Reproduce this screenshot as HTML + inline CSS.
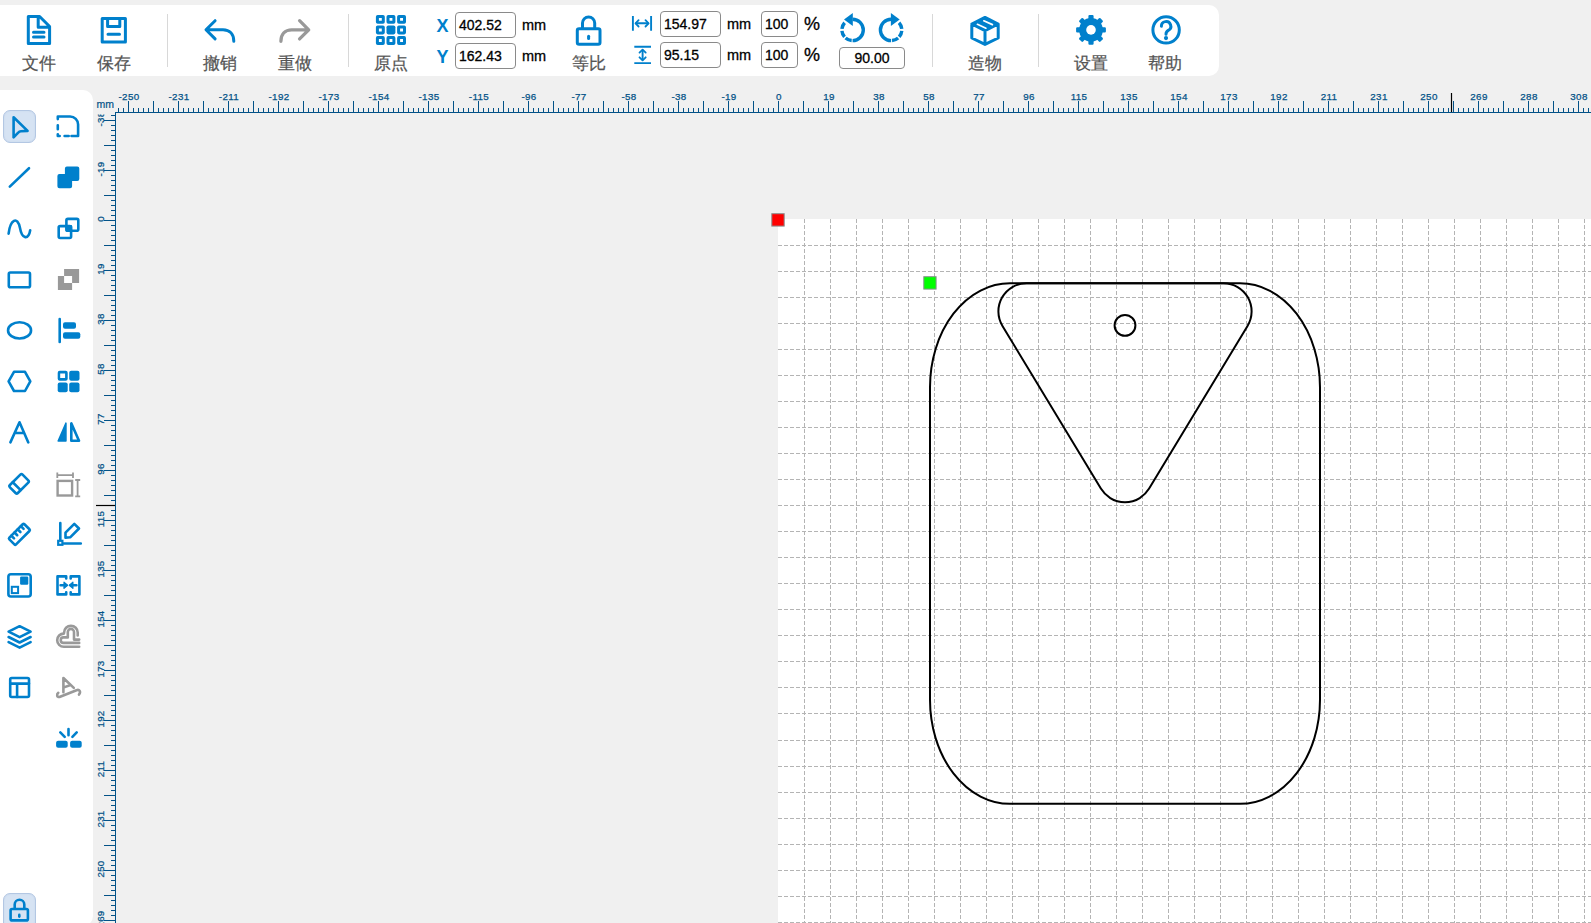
<!DOCTYPE html><html><head><meta charset="utf-8"><style>
*{box-sizing:border-box}
html,body{margin:0;padding:0}
body{width:1591px;height:923px;overflow:hidden;background:#f0f0f0;position:relative;font-family:"Liberation Sans",sans-serif}
.abs{position:absolute}
.lbl{position:absolute;font-size:17px;color:#555555;white-space:nowrap;transform:translateX(-50%);line-height:1;-webkit-text-stroke:0.25px #555555}
.inp{position:absolute;border:1px solid #8a8a8a;border-radius:4px;background:#fff;font-size:14px;color:#000;line-height:1;white-space:nowrap;-webkit-text-stroke:0.3px #000}
.unit{position:absolute;font-size:14.5px;color:#000;line-height:1;white-space:nowrap;-webkit-text-stroke:0.3px #000}
.sep{position:absolute;width:1px;background:#d8d8d8}
</style></head><body>

<div class="abs" style="left:778px;top:219px;width:813px;height:704px;background:#fff"></div>
<svg class="abs" style="left:0;top:0" width="1591" height="923" viewBox="0 0 1591 923"><g stroke="#b4b4b4" stroke-width="1" stroke-dasharray="4 2"><line x1="804.5" y1="219" x2="804.5" y2="923" /><line x1="830.5" y1="219" x2="830.5" y2="923" /><line x1="856.5" y1="219" x2="856.5" y2="923" /><line x1="882.5" y1="219" x2="882.5" y2="923" /><line x1="908.5" y1="219" x2="908.5" y2="923" /><line x1="934.5" y1="219" x2="934.5" y2="923" /><line x1="960.5" y1="219" x2="960.5" y2="923" /><line x1="986.5" y1="219" x2="986.5" y2="923" /><line x1="1012.5" y1="219" x2="1012.5" y2="923" /><line x1="1038.5" y1="219" x2="1038.5" y2="923" /><line x1="1064.5" y1="219" x2="1064.5" y2="923" /><line x1="1090.5" y1="219" x2="1090.5" y2="923" /><line x1="1116.5" y1="219" x2="1116.5" y2="923" /><line x1="1142.5" y1="219" x2="1142.5" y2="923" /><line x1="1168.5" y1="219" x2="1168.5" y2="923" /><line x1="1194.5" y1="219" x2="1194.5" y2="923" /><line x1="1220.5" y1="219" x2="1220.5" y2="923" /><line x1="1246.5" y1="219" x2="1246.5" y2="923" /><line x1="1272.5" y1="219" x2="1272.5" y2="923" /><line x1="1298.5" y1="219" x2="1298.5" y2="923" /><line x1="1324.5" y1="219" x2="1324.5" y2="923" /><line x1="1350.5" y1="219" x2="1350.5" y2="923" /><line x1="1376.5" y1="219" x2="1376.5" y2="923" /><line x1="1402.5" y1="219" x2="1402.5" y2="923" /><line x1="1428.5" y1="219" x2="1428.5" y2="923" /><line x1="1454.5" y1="219" x2="1454.5" y2="923" /><line x1="1480.5" y1="219" x2="1480.5" y2="923" /><line x1="1506.5" y1="219" x2="1506.5" y2="923" /><line x1="1532.5" y1="219" x2="1532.5" y2="923" /><line x1="1558.5" y1="219" x2="1558.5" y2="923" /><line x1="1584.5" y1="219" x2="1584.5" y2="923" /><line x1="778" y1="245.5" x2="1591" y2="245.5" /><line x1="778" y1="271.5" x2="1591" y2="271.5" /><line x1="778" y1="297.5" x2="1591" y2="297.5" /><line x1="778" y1="323.5" x2="1591" y2="323.5" /><line x1="778" y1="349.5" x2="1591" y2="349.5" /><line x1="778" y1="375.5" x2="1591" y2="375.5" /><line x1="778" y1="401.5" x2="1591" y2="401.5" /><line x1="778" y1="427.5" x2="1591" y2="427.5" /><line x1="778" y1="453.5" x2="1591" y2="453.5" /><line x1="778" y1="479.5" x2="1591" y2="479.5" /><line x1="778" y1="505.5" x2="1591" y2="505.5" /><line x1="778" y1="531.5" x2="1591" y2="531.5" /><line x1="778" y1="557.5" x2="1591" y2="557.5" /><line x1="778" y1="583.5" x2="1591" y2="583.5" /><line x1="778" y1="609.5" x2="1591" y2="609.5" /><line x1="778" y1="635.5" x2="1591" y2="635.5" /><line x1="778" y1="661.5" x2="1591" y2="661.5" /><line x1="778" y1="687.5" x2="1591" y2="687.5" /><line x1="778" y1="713.5" x2="1591" y2="713.5" /><line x1="778" y1="740.5" x2="1591" y2="740.5" /><line x1="778" y1="766.5" x2="1591" y2="766.5" /><line x1="778" y1="792.5" x2="1591" y2="792.5" /><line x1="778" y1="818.5" x2="1591" y2="818.5" /><line x1="778" y1="844.5" x2="1591" y2="844.5" /><line x1="778" y1="870.5" x2="1591" y2="870.5" /><line x1="778" y1="896.5" x2="1591" y2="896.5" /><line x1="778" y1="922.5" x2="1591" y2="922.5" /></g><g fill="none" stroke="#000" stroke-width="2"><rect x="930" y="283.25" width="390" height="520.6" rx="80" ry="104"/><path d="M1026.60,283.20 L1223.40,283.20 A28.2,28.2 0 0 1 1247.53,326.00 L1149.13,488.60 A28.2,28.2 0 0 1 1100.87,488.60 L1002.47,326.00 A28.2,28.2 0 0 1 1026.60,283.20 Z"/><circle cx="1125" cy="325.4" r="10.4"/></g><rect x="771.8" y="213.7" width="12.4" height="12.4" fill="#ff0000" stroke="#8c9090" stroke-width="1"/><rect x="923.8" y="276.7" width="12.3" height="12.4" fill="#00ff00" stroke="#8c9090" stroke-width="1"/></svg>
<svg class="abs" style="left:0;top:0" width="1591" height="923" viewBox="0 0 1591 923"><defs><clipPath id="hc"><rect x="116" y="85" width="1475" height="28"/></clipPath><clipPath id="vc"><rect x="93" y="114.5" width="23" height="810"/></clipPath></defs><g stroke="#035287" stroke-width="1" shape-rendering="crispEdges"><line x1="115" y1="112.5" x2="1591" y2="112.5"/><line x1="115.5" y1="112" x2="115.5" y2="923"/><line x1="118.5" y1="108" x2="118.5" y2="112"/><line x1="123.5" y1="108" x2="123.5" y2="112"/><line x1="128.5" y1="101" x2="128.5" y2="112"/><line x1="133.5" y1="108" x2="133.5" y2="112"/><line x1="138.5" y1="108" x2="138.5" y2="112"/><line x1="143.5" y1="108" x2="143.5" y2="112"/><line x1="148.5" y1="108" x2="148.5" y2="112"/><line x1="153.5" y1="101" x2="153.5" y2="112"/><line x1="158.5" y1="108" x2="158.5" y2="112"/><line x1="163.5" y1="108" x2="163.5" y2="112"/><line x1="168.5" y1="108" x2="168.5" y2="112"/><line x1="173.5" y1="108" x2="173.5" y2="112"/><line x1="178.5" y1="101" x2="178.5" y2="112"/><line x1="183.5" y1="108" x2="183.5" y2="112"/><line x1="188.5" y1="108" x2="188.5" y2="112"/><line x1="193.5" y1="108" x2="193.5" y2="112"/><line x1="198.5" y1="108" x2="198.5" y2="112"/><line x1="203.5" y1="101" x2="203.5" y2="112"/><line x1="208.5" y1="108" x2="208.5" y2="112"/><line x1="213.5" y1="108" x2="213.5" y2="112"/><line x1="218.5" y1="108" x2="218.5" y2="112"/><line x1="223.5" y1="108" x2="223.5" y2="112"/><line x1="228.5" y1="101" x2="228.5" y2="112"/><line x1="233.5" y1="108" x2="233.5" y2="112"/><line x1="238.5" y1="108" x2="238.5" y2="112"/><line x1="243.5" y1="108" x2="243.5" y2="112"/><line x1="248.5" y1="108" x2="248.5" y2="112"/><line x1="253.5" y1="101" x2="253.5" y2="112"/><line x1="258.5" y1="108" x2="258.5" y2="112"/><line x1="263.5" y1="108" x2="263.5" y2="112"/><line x1="268.5" y1="108" x2="268.5" y2="112"/><line x1="273.5" y1="108" x2="273.5" y2="112"/><line x1="278.5" y1="101" x2="278.5" y2="112"/><line x1="283.5" y1="108" x2="283.5" y2="112"/><line x1="288.5" y1="108" x2="288.5" y2="112"/><line x1="293.5" y1="108" x2="293.5" y2="112"/><line x1="298.5" y1="108" x2="298.5" y2="112"/><line x1="303.5" y1="101" x2="303.5" y2="112"/><line x1="308.5" y1="108" x2="308.5" y2="112"/><line x1="313.5" y1="108" x2="313.5" y2="112"/><line x1="318.5" y1="108" x2="318.5" y2="112"/><line x1="323.5" y1="108" x2="323.5" y2="112"/><line x1="328.5" y1="101" x2="328.5" y2="112"/><line x1="333.5" y1="108" x2="333.5" y2="112"/><line x1="338.5" y1="108" x2="338.5" y2="112"/><line x1="343.5" y1="108" x2="343.5" y2="112"/><line x1="348.5" y1="108" x2="348.5" y2="112"/><line x1="353.5" y1="101" x2="353.5" y2="112"/><line x1="358.5" y1="108" x2="358.5" y2="112"/><line x1="363.5" y1="108" x2="363.5" y2="112"/><line x1="368.5" y1="108" x2="368.5" y2="112"/><line x1="373.5" y1="108" x2="373.5" y2="112"/><line x1="378.5" y1="101" x2="378.5" y2="112"/><line x1="383.5" y1="108" x2="383.5" y2="112"/><line x1="388.5" y1="108" x2="388.5" y2="112"/><line x1="393.5" y1="108" x2="393.5" y2="112"/><line x1="398.5" y1="108" x2="398.5" y2="112"/><line x1="403.5" y1="101" x2="403.5" y2="112"/><line x1="408.5" y1="108" x2="408.5" y2="112"/><line x1="413.5" y1="108" x2="413.5" y2="112"/><line x1="418.5" y1="108" x2="418.5" y2="112"/><line x1="423.5" y1="108" x2="423.5" y2="112"/><line x1="428.5" y1="101" x2="428.5" y2="112"/><line x1="433.5" y1="108" x2="433.5" y2="112"/><line x1="438.5" y1="108" x2="438.5" y2="112"/><line x1="443.5" y1="108" x2="443.5" y2="112"/><line x1="448.5" y1="108" x2="448.5" y2="112"/><line x1="453.5" y1="101" x2="453.5" y2="112"/><line x1="458.5" y1="108" x2="458.5" y2="112"/><line x1="463.5" y1="108" x2="463.5" y2="112"/><line x1="468.5" y1="108" x2="468.5" y2="112"/><line x1="473.5" y1="108" x2="473.5" y2="112"/><line x1="478.5" y1="101" x2="478.5" y2="112"/><line x1="483.5" y1="108" x2="483.5" y2="112"/><line x1="488.5" y1="108" x2="488.5" y2="112"/><line x1="493.5" y1="108" x2="493.5" y2="112"/><line x1="498.5" y1="108" x2="498.5" y2="112"/><line x1="503.5" y1="101" x2="503.5" y2="112"/><line x1="508.5" y1="108" x2="508.5" y2="112"/><line x1="513.5" y1="108" x2="513.5" y2="112"/><line x1="518.5" y1="108" x2="518.5" y2="112"/><line x1="523.5" y1="108" x2="523.5" y2="112"/><line x1="528.5" y1="101" x2="528.5" y2="112"/><line x1="533.5" y1="108" x2="533.5" y2="112"/><line x1="538.5" y1="108" x2="538.5" y2="112"/><line x1="543.5" y1="108" x2="543.5" y2="112"/><line x1="548.5" y1="108" x2="548.5" y2="112"/><line x1="553.5" y1="101" x2="553.5" y2="112"/><line x1="558.5" y1="108" x2="558.5" y2="112"/><line x1="563.5" y1="108" x2="563.5" y2="112"/><line x1="568.5" y1="108" x2="568.5" y2="112"/><line x1="573.5" y1="108" x2="573.5" y2="112"/><line x1="578.5" y1="101" x2="578.5" y2="112"/><line x1="583.5" y1="108" x2="583.5" y2="112"/><line x1="588.5" y1="108" x2="588.5" y2="112"/><line x1="593.5" y1="108" x2="593.5" y2="112"/><line x1="598.5" y1="108" x2="598.5" y2="112"/><line x1="603.5" y1="101" x2="603.5" y2="112"/><line x1="608.5" y1="108" x2="608.5" y2="112"/><line x1="613.5" y1="108" x2="613.5" y2="112"/><line x1="618.5" y1="108" x2="618.5" y2="112"/><line x1="623.5" y1="108" x2="623.5" y2="112"/><line x1="628.5" y1="101" x2="628.5" y2="112"/><line x1="633.5" y1="108" x2="633.5" y2="112"/><line x1="638.5" y1="108" x2="638.5" y2="112"/><line x1="643.5" y1="108" x2="643.5" y2="112"/><line x1="648.5" y1="108" x2="648.5" y2="112"/><line x1="653.5" y1="101" x2="653.5" y2="112"/><line x1="658.5" y1="108" x2="658.5" y2="112"/><line x1="663.5" y1="108" x2="663.5" y2="112"/><line x1="668.5" y1="108" x2="668.5" y2="112"/><line x1="673.5" y1="108" x2="673.5" y2="112"/><line x1="678.5" y1="101" x2="678.5" y2="112"/><line x1="683.5" y1="108" x2="683.5" y2="112"/><line x1="688.5" y1="108" x2="688.5" y2="112"/><line x1="693.5" y1="108" x2="693.5" y2="112"/><line x1="698.5" y1="108" x2="698.5" y2="112"/><line x1="703.5" y1="101" x2="703.5" y2="112"/><line x1="708.5" y1="108" x2="708.5" y2="112"/><line x1="713.5" y1="108" x2="713.5" y2="112"/><line x1="718.5" y1="108" x2="718.5" y2="112"/><line x1="723.5" y1="108" x2="723.5" y2="112"/><line x1="728.5" y1="101" x2="728.5" y2="112"/><line x1="733.5" y1="108" x2="733.5" y2="112"/><line x1="738.5" y1="108" x2="738.5" y2="112"/><line x1="743.5" y1="108" x2="743.5" y2="112"/><line x1="748.5" y1="108" x2="748.5" y2="112"/><line x1="753.5" y1="101" x2="753.5" y2="112"/><line x1="758.5" y1="108" x2="758.5" y2="112"/><line x1="763.5" y1="108" x2="763.5" y2="112"/><line x1="768.5" y1="108" x2="768.5" y2="112"/><line x1="773.5" y1="108" x2="773.5" y2="112"/><line x1="778.5" y1="101" x2="778.5" y2="112"/><line x1="783.5" y1="108" x2="783.5" y2="112"/><line x1="788.5" y1="108" x2="788.5" y2="112"/><line x1="793.5" y1="108" x2="793.5" y2="112"/><line x1="798.5" y1="108" x2="798.5" y2="112"/><line x1="803.5" y1="101" x2="803.5" y2="112"/><line x1="808.5" y1="108" x2="808.5" y2="112"/><line x1="813.5" y1="108" x2="813.5" y2="112"/><line x1="818.5" y1="108" x2="818.5" y2="112"/><line x1="823.5" y1="108" x2="823.5" y2="112"/><line x1="828.5" y1="101" x2="828.5" y2="112"/><line x1="833.5" y1="108" x2="833.5" y2="112"/><line x1="838.5" y1="108" x2="838.5" y2="112"/><line x1="843.5" y1="108" x2="843.5" y2="112"/><line x1="848.5" y1="108" x2="848.5" y2="112"/><line x1="853.5" y1="101" x2="853.5" y2="112"/><line x1="858.5" y1="108" x2="858.5" y2="112"/><line x1="863.5" y1="108" x2="863.5" y2="112"/><line x1="868.5" y1="108" x2="868.5" y2="112"/><line x1="873.5" y1="108" x2="873.5" y2="112"/><line x1="878.5" y1="101" x2="878.5" y2="112"/><line x1="883.5" y1="108" x2="883.5" y2="112"/><line x1="888.5" y1="108" x2="888.5" y2="112"/><line x1="893.5" y1="108" x2="893.5" y2="112"/><line x1="898.5" y1="108" x2="898.5" y2="112"/><line x1="903.5" y1="101" x2="903.5" y2="112"/><line x1="908.5" y1="108" x2="908.5" y2="112"/><line x1="913.5" y1="108" x2="913.5" y2="112"/><line x1="918.5" y1="108" x2="918.5" y2="112"/><line x1="923.5" y1="108" x2="923.5" y2="112"/><line x1="928.5" y1="101" x2="928.5" y2="112"/><line x1="933.5" y1="108" x2="933.5" y2="112"/><line x1="938.5" y1="108" x2="938.5" y2="112"/><line x1="943.5" y1="108" x2="943.5" y2="112"/><line x1="948.5" y1="108" x2="948.5" y2="112"/><line x1="953.5" y1="101" x2="953.5" y2="112"/><line x1="958.5" y1="108" x2="958.5" y2="112"/><line x1="963.5" y1="108" x2="963.5" y2="112"/><line x1="968.5" y1="108" x2="968.5" y2="112"/><line x1="973.5" y1="108" x2="973.5" y2="112"/><line x1="978.5" y1="101" x2="978.5" y2="112"/><line x1="983.5" y1="108" x2="983.5" y2="112"/><line x1="988.5" y1="108" x2="988.5" y2="112"/><line x1="993.5" y1="108" x2="993.5" y2="112"/><line x1="998.5" y1="108" x2="998.5" y2="112"/><line x1="1003.5" y1="101" x2="1003.5" y2="112"/><line x1="1008.5" y1="108" x2="1008.5" y2="112"/><line x1="1013.5" y1="108" x2="1013.5" y2="112"/><line x1="1018.5" y1="108" x2="1018.5" y2="112"/><line x1="1023.5" y1="108" x2="1023.5" y2="112"/><line x1="1028.5" y1="101" x2="1028.5" y2="112"/><line x1="1033.5" y1="108" x2="1033.5" y2="112"/><line x1="1038.5" y1="108" x2="1038.5" y2="112"/><line x1="1043.5" y1="108" x2="1043.5" y2="112"/><line x1="1048.5" y1="108" x2="1048.5" y2="112"/><line x1="1053.5" y1="101" x2="1053.5" y2="112"/><line x1="1058.5" y1="108" x2="1058.5" y2="112"/><line x1="1063.5" y1="108" x2="1063.5" y2="112"/><line x1="1068.5" y1="108" x2="1068.5" y2="112"/><line x1="1073.5" y1="108" x2="1073.5" y2="112"/><line x1="1078.5" y1="101" x2="1078.5" y2="112"/><line x1="1083.5" y1="108" x2="1083.5" y2="112"/><line x1="1088.5" y1="108" x2="1088.5" y2="112"/><line x1="1093.5" y1="108" x2="1093.5" y2="112"/><line x1="1098.5" y1="108" x2="1098.5" y2="112"/><line x1="1103.5" y1="101" x2="1103.5" y2="112"/><line x1="1108.5" y1="108" x2="1108.5" y2="112"/><line x1="1113.5" y1="108" x2="1113.5" y2="112"/><line x1="1118.5" y1="108" x2="1118.5" y2="112"/><line x1="1123.5" y1="108" x2="1123.5" y2="112"/><line x1="1128.5" y1="101" x2="1128.5" y2="112"/><line x1="1133.5" y1="108" x2="1133.5" y2="112"/><line x1="1138.5" y1="108" x2="1138.5" y2="112"/><line x1="1143.5" y1="108" x2="1143.5" y2="112"/><line x1="1148.5" y1="108" x2="1148.5" y2="112"/><line x1="1153.5" y1="101" x2="1153.5" y2="112"/><line x1="1158.5" y1="108" x2="1158.5" y2="112"/><line x1="1163.5" y1="108" x2="1163.5" y2="112"/><line x1="1168.5" y1="108" x2="1168.5" y2="112"/><line x1="1173.5" y1="108" x2="1173.5" y2="112"/><line x1="1178.5" y1="101" x2="1178.5" y2="112"/><line x1="1183.5" y1="108" x2="1183.5" y2="112"/><line x1="1188.5" y1="108" x2="1188.5" y2="112"/><line x1="1193.5" y1="108" x2="1193.5" y2="112"/><line x1="1198.5" y1="108" x2="1198.5" y2="112"/><line x1="1203.5" y1="101" x2="1203.5" y2="112"/><line x1="1208.5" y1="108" x2="1208.5" y2="112"/><line x1="1213.5" y1="108" x2="1213.5" y2="112"/><line x1="1218.5" y1="108" x2="1218.5" y2="112"/><line x1="1223.5" y1="108" x2="1223.5" y2="112"/><line x1="1228.5" y1="101" x2="1228.5" y2="112"/><line x1="1233.5" y1="108" x2="1233.5" y2="112"/><line x1="1238.5" y1="108" x2="1238.5" y2="112"/><line x1="1243.5" y1="108" x2="1243.5" y2="112"/><line x1="1248.5" y1="108" x2="1248.5" y2="112"/><line x1="1253.5" y1="101" x2="1253.5" y2="112"/><line x1="1258.5" y1="108" x2="1258.5" y2="112"/><line x1="1263.5" y1="108" x2="1263.5" y2="112"/><line x1="1268.5" y1="108" x2="1268.5" y2="112"/><line x1="1273.5" y1="108" x2="1273.5" y2="112"/><line x1="1278.5" y1="101" x2="1278.5" y2="112"/><line x1="1283.5" y1="108" x2="1283.5" y2="112"/><line x1="1288.5" y1="108" x2="1288.5" y2="112"/><line x1="1293.5" y1="108" x2="1293.5" y2="112"/><line x1="1298.5" y1="108" x2="1298.5" y2="112"/><line x1="1303.5" y1="101" x2="1303.5" y2="112"/><line x1="1308.5" y1="108" x2="1308.5" y2="112"/><line x1="1313.5" y1="108" x2="1313.5" y2="112"/><line x1="1318.5" y1="108" x2="1318.5" y2="112"/><line x1="1323.5" y1="108" x2="1323.5" y2="112"/><line x1="1328.5" y1="101" x2="1328.5" y2="112"/><line x1="1333.5" y1="108" x2="1333.5" y2="112"/><line x1="1338.5" y1="108" x2="1338.5" y2="112"/><line x1="1343.5" y1="108" x2="1343.5" y2="112"/><line x1="1348.5" y1="108" x2="1348.5" y2="112"/><line x1="1353.5" y1="101" x2="1353.5" y2="112"/><line x1="1358.5" y1="108" x2="1358.5" y2="112"/><line x1="1363.5" y1="108" x2="1363.5" y2="112"/><line x1="1368.5" y1="108" x2="1368.5" y2="112"/><line x1="1373.5" y1="108" x2="1373.5" y2="112"/><line x1="1378.5" y1="101" x2="1378.5" y2="112"/><line x1="1383.5" y1="108" x2="1383.5" y2="112"/><line x1="1388.5" y1="108" x2="1388.5" y2="112"/><line x1="1393.5" y1="108" x2="1393.5" y2="112"/><line x1="1398.5" y1="108" x2="1398.5" y2="112"/><line x1="1403.5" y1="101" x2="1403.5" y2="112"/><line x1="1408.5" y1="108" x2="1408.5" y2="112"/><line x1="1413.5" y1="108" x2="1413.5" y2="112"/><line x1="1418.5" y1="108" x2="1418.5" y2="112"/><line x1="1423.5" y1="108" x2="1423.5" y2="112"/><line x1="1428.5" y1="101" x2="1428.5" y2="112"/><line x1="1433.5" y1="108" x2="1433.5" y2="112"/><line x1="1438.5" y1="108" x2="1438.5" y2="112"/><line x1="1443.5" y1="108" x2="1443.5" y2="112"/><line x1="1448.5" y1="108" x2="1448.5" y2="112"/><line x1="1453.5" y1="101" x2="1453.5" y2="112"/><line x1="1458.5" y1="108" x2="1458.5" y2="112"/><line x1="1463.5" y1="108" x2="1463.5" y2="112"/><line x1="1468.5" y1="108" x2="1468.5" y2="112"/><line x1="1473.5" y1="108" x2="1473.5" y2="112"/><line x1="1478.5" y1="101" x2="1478.5" y2="112"/><line x1="1483.5" y1="108" x2="1483.5" y2="112"/><line x1="1488.5" y1="108" x2="1488.5" y2="112"/><line x1="1493.5" y1="108" x2="1493.5" y2="112"/><line x1="1498.5" y1="108" x2="1498.5" y2="112"/><line x1="1503.5" y1="101" x2="1503.5" y2="112"/><line x1="1508.5" y1="108" x2="1508.5" y2="112"/><line x1="1513.5" y1="108" x2="1513.5" y2="112"/><line x1="1518.5" y1="108" x2="1518.5" y2="112"/><line x1="1523.5" y1="108" x2="1523.5" y2="112"/><line x1="1528.5" y1="101" x2="1528.5" y2="112"/><line x1="1533.5" y1="108" x2="1533.5" y2="112"/><line x1="1538.5" y1="108" x2="1538.5" y2="112"/><line x1="1543.5" y1="108" x2="1543.5" y2="112"/><line x1="1548.5" y1="108" x2="1548.5" y2="112"/><line x1="1553.5" y1="101" x2="1553.5" y2="112"/><line x1="1558.5" y1="108" x2="1558.5" y2="112"/><line x1="1563.5" y1="108" x2="1563.5" y2="112"/><line x1="1568.5" y1="108" x2="1568.5" y2="112"/><line x1="1573.5" y1="108" x2="1573.5" y2="112"/><line x1="1578.5" y1="101" x2="1578.5" y2="112"/><line x1="1583.5" y1="108" x2="1583.5" y2="112"/><line x1="1588.5" y1="108" x2="1588.5" y2="112"/><line x1="111" y1="115.5" x2="115" y2="115.5"/><line x1="104" y1="120.5" x2="115" y2="120.5"/><line x1="111" y1="125.5" x2="115" y2="125.5"/><line x1="111" y1="130.5" x2="115" y2="130.5"/><line x1="111" y1="135.5" x2="115" y2="135.5"/><line x1="111" y1="140.5" x2="115" y2="140.5"/><line x1="104" y1="145.5" x2="115" y2="145.5"/><line x1="111" y1="150.5" x2="115" y2="150.5"/><line x1="111" y1="155.5" x2="115" y2="155.5"/><line x1="111" y1="160.5" x2="115" y2="160.5"/><line x1="111" y1="165.5" x2="115" y2="165.5"/><line x1="104" y1="170.5" x2="115" y2="170.5"/><line x1="111" y1="175.5" x2="115" y2="175.5"/><line x1="111" y1="180.5" x2="115" y2="180.5"/><line x1="111" y1="185.5" x2="115" y2="185.5"/><line x1="111" y1="190.5" x2="115" y2="190.5"/><line x1="104" y1="195.5" x2="115" y2="195.5"/><line x1="111" y1="200.5" x2="115" y2="200.5"/><line x1="111" y1="205.5" x2="115" y2="205.5"/><line x1="111" y1="210.5" x2="115" y2="210.5"/><line x1="111" y1="215.5" x2="115" y2="215.5"/><line x1="104" y1="220.5" x2="115" y2="220.5"/><line x1="111" y1="225.5" x2="115" y2="225.5"/><line x1="111" y1="230.5" x2="115" y2="230.5"/><line x1="111" y1="235.5" x2="115" y2="235.5"/><line x1="111" y1="240.5" x2="115" y2="240.5"/><line x1="104" y1="245.5" x2="115" y2="245.5"/><line x1="111" y1="250.5" x2="115" y2="250.5"/><line x1="111" y1="255.5" x2="115" y2="255.5"/><line x1="111" y1="260.5" x2="115" y2="260.5"/><line x1="111" y1="265.5" x2="115" y2="265.5"/><line x1="104" y1="270.5" x2="115" y2="270.5"/><line x1="111" y1="275.5" x2="115" y2="275.5"/><line x1="111" y1="280.5" x2="115" y2="280.5"/><line x1="111" y1="285.5" x2="115" y2="285.5"/><line x1="111" y1="290.5" x2="115" y2="290.5"/><line x1="104" y1="295.5" x2="115" y2="295.5"/><line x1="111" y1="300.5" x2="115" y2="300.5"/><line x1="111" y1="305.5" x2="115" y2="305.5"/><line x1="111" y1="310.5" x2="115" y2="310.5"/><line x1="111" y1="315.5" x2="115" y2="315.5"/><line x1="104" y1="320.5" x2="115" y2="320.5"/><line x1="111" y1="325.5" x2="115" y2="325.5"/><line x1="111" y1="330.5" x2="115" y2="330.5"/><line x1="111" y1="335.5" x2="115" y2="335.5"/><line x1="111" y1="340.5" x2="115" y2="340.5"/><line x1="104" y1="345.5" x2="115" y2="345.5"/><line x1="111" y1="350.5" x2="115" y2="350.5"/><line x1="111" y1="355.5" x2="115" y2="355.5"/><line x1="111" y1="360.5" x2="115" y2="360.5"/><line x1="111" y1="365.5" x2="115" y2="365.5"/><line x1="104" y1="370.5" x2="115" y2="370.5"/><line x1="111" y1="375.5" x2="115" y2="375.5"/><line x1="111" y1="380.5" x2="115" y2="380.5"/><line x1="111" y1="385.5" x2="115" y2="385.5"/><line x1="111" y1="390.5" x2="115" y2="390.5"/><line x1="104" y1="395.5" x2="115" y2="395.5"/><line x1="111" y1="400.5" x2="115" y2="400.5"/><line x1="111" y1="405.5" x2="115" y2="405.5"/><line x1="111" y1="410.5" x2="115" y2="410.5"/><line x1="111" y1="415.5" x2="115" y2="415.5"/><line x1="104" y1="420.5" x2="115" y2="420.5"/><line x1="111" y1="425.5" x2="115" y2="425.5"/><line x1="111" y1="430.5" x2="115" y2="430.5"/><line x1="111" y1="435.5" x2="115" y2="435.5"/><line x1="111" y1="440.5" x2="115" y2="440.5"/><line x1="104" y1="445.5" x2="115" y2="445.5"/><line x1="111" y1="450.5" x2="115" y2="450.5"/><line x1="111" y1="455.5" x2="115" y2="455.5"/><line x1="111" y1="460.5" x2="115" y2="460.5"/><line x1="111" y1="465.5" x2="115" y2="465.5"/><line x1="104" y1="470.5" x2="115" y2="470.5"/><line x1="111" y1="475.5" x2="115" y2="475.5"/><line x1="111" y1="480.5" x2="115" y2="480.5"/><line x1="111" y1="485.5" x2="115" y2="485.5"/><line x1="111" y1="490.5" x2="115" y2="490.5"/><line x1="104" y1="495.5" x2="115" y2="495.5"/><line x1="111" y1="500.5" x2="115" y2="500.5"/><line x1="111" y1="505.5" x2="115" y2="505.5"/><line x1="111" y1="510.5" x2="115" y2="510.5"/><line x1="111" y1="515.5" x2="115" y2="515.5"/><line x1="104" y1="520.5" x2="115" y2="520.5"/><line x1="111" y1="525.5" x2="115" y2="525.5"/><line x1="111" y1="530.5" x2="115" y2="530.5"/><line x1="111" y1="535.5" x2="115" y2="535.5"/><line x1="111" y1="540.5" x2="115" y2="540.5"/><line x1="104" y1="545.5" x2="115" y2="545.5"/><line x1="111" y1="550.5" x2="115" y2="550.5"/><line x1="111" y1="555.5" x2="115" y2="555.5"/><line x1="111" y1="560.5" x2="115" y2="560.5"/><line x1="111" y1="565.5" x2="115" y2="565.5"/><line x1="104" y1="570.5" x2="115" y2="570.5"/><line x1="111" y1="575.5" x2="115" y2="575.5"/><line x1="111" y1="580.5" x2="115" y2="580.5"/><line x1="111" y1="585.5" x2="115" y2="585.5"/><line x1="111" y1="590.5" x2="115" y2="590.5"/><line x1="104" y1="595.5" x2="115" y2="595.5"/><line x1="111" y1="600.5" x2="115" y2="600.5"/><line x1="111" y1="605.5" x2="115" y2="605.5"/><line x1="111" y1="610.5" x2="115" y2="610.5"/><line x1="111" y1="615.5" x2="115" y2="615.5"/><line x1="104" y1="620.5" x2="115" y2="620.5"/><line x1="111" y1="625.5" x2="115" y2="625.5"/><line x1="111" y1="630.5" x2="115" y2="630.5"/><line x1="111" y1="635.5" x2="115" y2="635.5"/><line x1="111" y1="640.5" x2="115" y2="640.5"/><line x1="104" y1="645.5" x2="115" y2="645.5"/><line x1="111" y1="650.5" x2="115" y2="650.5"/><line x1="111" y1="655.5" x2="115" y2="655.5"/><line x1="111" y1="660.5" x2="115" y2="660.5"/><line x1="111" y1="665.5" x2="115" y2="665.5"/><line x1="104" y1="670.5" x2="115" y2="670.5"/><line x1="111" y1="675.5" x2="115" y2="675.5"/><line x1="111" y1="680.5" x2="115" y2="680.5"/><line x1="111" y1="685.5" x2="115" y2="685.5"/><line x1="111" y1="690.5" x2="115" y2="690.5"/><line x1="104" y1="695.5" x2="115" y2="695.5"/><line x1="111" y1="700.5" x2="115" y2="700.5"/><line x1="111" y1="705.5" x2="115" y2="705.5"/><line x1="111" y1="710.5" x2="115" y2="710.5"/><line x1="111" y1="715.5" x2="115" y2="715.5"/><line x1="104" y1="720.5" x2="115" y2="720.5"/><line x1="111" y1="725.5" x2="115" y2="725.5"/><line x1="111" y1="730.5" x2="115" y2="730.5"/><line x1="111" y1="735.5" x2="115" y2="735.5"/><line x1="111" y1="740.5" x2="115" y2="740.5"/><line x1="104" y1="745.5" x2="115" y2="745.5"/><line x1="111" y1="750.5" x2="115" y2="750.5"/><line x1="111" y1="755.5" x2="115" y2="755.5"/><line x1="111" y1="760.5" x2="115" y2="760.5"/><line x1="111" y1="765.5" x2="115" y2="765.5"/><line x1="104" y1="770.5" x2="115" y2="770.5"/><line x1="111" y1="775.5" x2="115" y2="775.5"/><line x1="111" y1="780.5" x2="115" y2="780.5"/><line x1="111" y1="785.5" x2="115" y2="785.5"/><line x1="111" y1="790.5" x2="115" y2="790.5"/><line x1="104" y1="795.5" x2="115" y2="795.5"/><line x1="111" y1="800.5" x2="115" y2="800.5"/><line x1="111" y1="805.5" x2="115" y2="805.5"/><line x1="111" y1="810.5" x2="115" y2="810.5"/><line x1="111" y1="815.5" x2="115" y2="815.5"/><line x1="104" y1="820.5" x2="115" y2="820.5"/><line x1="111" y1="825.5" x2="115" y2="825.5"/><line x1="111" y1="830.5" x2="115" y2="830.5"/><line x1="111" y1="835.5" x2="115" y2="835.5"/><line x1="111" y1="840.5" x2="115" y2="840.5"/><line x1="104" y1="845.5" x2="115" y2="845.5"/><line x1="111" y1="850.5" x2="115" y2="850.5"/><line x1="111" y1="855.5" x2="115" y2="855.5"/><line x1="111" y1="860.5" x2="115" y2="860.5"/><line x1="111" y1="865.5" x2="115" y2="865.5"/><line x1="104" y1="870.5" x2="115" y2="870.5"/><line x1="111" y1="875.5" x2="115" y2="875.5"/><line x1="111" y1="880.5" x2="115" y2="880.5"/><line x1="111" y1="885.5" x2="115" y2="885.5"/><line x1="111" y1="890.5" x2="115" y2="890.5"/><line x1="104" y1="895.5" x2="115" y2="895.5"/><line x1="111" y1="900.5" x2="115" y2="900.5"/><line x1="111" y1="905.5" x2="115" y2="905.5"/><line x1="111" y1="910.5" x2="115" y2="910.5"/><line x1="111" y1="915.5" x2="115" y2="915.5"/><line x1="104" y1="920.5" x2="115" y2="920.5"/></g><g fill="#035287" stroke="#035287" stroke-width="0.25" font-family="Liberation Sans, sans-serif" font-size="9.8" letter-spacing="0.35" text-anchor="middle" clip-path="url(#hc)"><text x="129" y="100">-250</text><text x="179" y="100">-231</text><text x="229" y="100">-211</text><text x="279" y="100">-192</text><text x="329" y="100">-173</text><text x="379" y="100">-154</text><text x="429" y="100">-135</text><text x="479" y="100">-115</text><text x="529" y="100">-96</text><text x="579" y="100">-77</text><text x="629" y="100">-58</text><text x="679" y="100">-38</text><text x="729" y="100">-19</text><text x="779" y="100">0</text><text x="829" y="100">19</text><text x="879" y="100">38</text><text x="929" y="100">58</text><text x="979" y="100">77</text><text x="1029" y="100">96</text><text x="1079" y="100">115</text><text x="1129" y="100">135</text><text x="1179" y="100">154</text><text x="1229" y="100">173</text><text x="1279" y="100">192</text><text x="1329" y="100">211</text><text x="1379" y="100">231</text><text x="1429" y="100">250</text><text x="1479" y="100">269</text><text x="1529" y="100">288</text><text x="1579" y="100">308</text></g><g fill="#035287" stroke="#035287" stroke-width="0.25" font-family="Liberation Sans, sans-serif" font-size="9.7" letter-spacing="0.3" text-anchor="middle" clip-path="url(#vc)"><text transform="translate(104,119) rotate(-90)" x="0" y="0">-38</text><text transform="translate(104,169) rotate(-90)" x="0" y="0">-19</text><text transform="translate(104,219) rotate(-90)" x="0" y="0">0</text><text transform="translate(104,269) rotate(-90)" x="0" y="0">19</text><text transform="translate(104,319) rotate(-90)" x="0" y="0">38</text><text transform="translate(104,369) rotate(-90)" x="0" y="0">58</text><text transform="translate(104,419) rotate(-90)" x="0" y="0">77</text><text transform="translate(104,469) rotate(-90)" x="0" y="0">96</text><text transform="translate(104,519) rotate(-90)" x="0" y="0">115</text><text transform="translate(104,569) rotate(-90)" x="0" y="0">135</text><text transform="translate(104,619) rotate(-90)" x="0" y="0">154</text><text transform="translate(104,669) rotate(-90)" x="0" y="0">173</text><text transform="translate(104,719) rotate(-90)" x="0" y="0">192</text><text transform="translate(104,769) rotate(-90)" x="0" y="0">211</text><text transform="translate(104,819) rotate(-90)" x="0" y="0">231</text><text transform="translate(104,869) rotate(-90)" x="0" y="0">250</text><text transform="translate(104,919) rotate(-90)" x="0" y="0">269</text></g><text x="96.5" y="108" fill="#035287" stroke="#035287" stroke-width="0.2" font-family="Liberation Sans, sans-serif" font-size="10.5">mm</text><line x1="1451.5" y1="93" x2="1451.5" y2="112" stroke="#000" stroke-width="1.2"/><line x1="96" y1="505.5" x2="115" y2="505.5" stroke="#000" stroke-width="1.2"/></svg>
<div class="abs" style="left:-10px;top:90px;width:103px;height:836px;background:#fff;border-radius:10px"></div>
<div class="abs" style="left:3px;top:110px;width:33px;height:33px;background:#d6e3f3;border:1px solid #b3c7e3;box-shadow:inset 0 0 1.5px #bccfe8;border-radius:7px"></div>
<div class="abs" style="left:3px;top:893px;width:33px;height:40px;background:#d6e3f3;border:1px solid #b3c7e3;box-shadow:inset 0 0 1.5px #bccfe8;border-radius:7px"></div>
<svg class="abs" style="left:0;top:0" width="93" height="923" viewBox="0 0 93 923"><path fill="none" stroke="#0080cc" stroke-width="2.6" stroke-linecap="round" stroke-linejoin="round" stroke-width="2.8" d="M13.6,117.2 L27.6,130.9 L21,131.3 Q19.3,131.4 18.2,132.6 L13.6,137.4 Z"/><path fill="none" stroke="#0080cc" stroke-width="2.6" stroke-linecap="round" stroke-linejoin="round" stroke-width="2.6" d="M57.8,119.1 V116.5 H70.1 A8,8 0 0 1 78.1,124.5 V136 H71.5 M57.8,125.2 V129.2 M57.8,134.2 V136 H59.7 M64.6,136 H68.7"/><line fill="none" stroke="#0080cc" stroke-width="2.6" stroke-linecap="round" stroke-linejoin="round" x1="9.8" y1="186.6" x2="29" y2="168.2"/><path fill="#0080cc" d="M66.9,166.6 H77.3 A2,2 0 0 1 79.3,168.6 V179 A2,2 0 0 1 77.3,181 H72.1 V186.2 A2,2 0 0 1 70.1,188.2 H59.4 A2,2 0 0 1 57.4,186.2 V176 A2,2 0 0 1 59.4,174 H64.9 V168.6 A2,2 0 0 1 66.9,166.6 Z"/><path fill="none" stroke="#0080cc" stroke-width="2.6" stroke-linecap="round" stroke-linejoin="round" stroke-width="2.8" d="M8.6,233.7 C10.2,219.5 17.5,215.5 20,228 C22,239.5 28.5,240 30.2,230.3"/><rect fill="none" stroke="#0080cc" stroke-width="2.6" stroke-linecap="round" stroke-linejoin="round" x="66.4" y="218.9" width="11.9" height="11.9" rx="1.5"/><rect fill="none" stroke="#0080cc" stroke-width="2.6" stroke-linecap="round" stroke-linejoin="round" x="58.7" y="226.1" width="12.4" height="11.9" rx="1.5"/><rect fill="#0080cc" x="65.4" y="225.1" width="6.7" height="6.7" rx="1"/><rect fill="none" stroke="#0080cc" stroke-width="2.6" stroke-linecap="round" stroke-linejoin="round" x="8.8" y="272.5" width="21.2" height="14.8" rx="1.5"/><path fill="#999999" fill-rule="evenodd" d="M64.1,269 H79.1 V283 H72.1 V290 H57.9 V275.9 H64.1 Z M64.1,275.9 V283 H72.1 V275.9 Z"/><ellipse fill="none" stroke="#0080cc" stroke-width="2.6" stroke-linecap="round" stroke-linejoin="round" cx="19.55" cy="330.4" rx="11.5" ry="8.1"/><line fill="none" stroke="#0080cc" stroke-width="2.6" stroke-linecap="round" stroke-linejoin="round" stroke-width="2.5" x1="59.7" y1="319" x2="59.7" y2="342"/><rect fill="#0080cc" x="63" y="322.3" width="13" height="6.4" rx="2"/><rect fill="#0080cc" x="63" y="332.3" width="17.3" height="6.5" rx="2"/><path fill="none" stroke="#0080cc" stroke-width="2.6" stroke-linecap="round" stroke-linejoin="round" d="M8.6,381.3 L14,371.8 H25 L30.3,381.3 L25,391 H14 Z"/><path fill="#0080cc" fill-rule="evenodd" d="M59.7,370.7 H65.7 A2,2 0 0 1 67.7,372.7 V378.7 A2,2 0 0 1 65.7,380.7 H59.7 A2,2 0 0 1 57.7,378.7 V372.7 A2,2 0 0 1 59.7,370.7 Z M60.2,373.4 V378.1 H65.1 V373.4 Z"/><rect fill="#0080cc" x="69.2" y="370.7" width="10.3" height="10" rx="2"/><rect fill="#0080cc" x="57.7" y="382.4" width="10" height="9.9" rx="2"/><rect fill="#0080cc" x="69.2" y="382.4" width="10.3" height="9.9" rx="2"/><path fill="none" stroke="#0080cc" stroke-width="2.6" stroke-linecap="round" stroke-linejoin="round" d="M10.4,442.4 L19.5,422.3 L28.3,442.4 M15.2,433 H23.8"/><path fill="#0080cc" stroke="#0080cc" stroke-width="1.6" stroke-linejoin="round" d="M65.9,423.2 V441 H58.2 Z"/><path fill="none" stroke="#0080cc" stroke-width="2.6" stroke-linecap="round" stroke-linejoin="round" stroke-width="2" d="M71.3,423.4 V440.8 H79 Z"/><g transform="translate(19.1,483.8) rotate(-45)"><rect fill="none" stroke="#0080cc" stroke-width="2.6" stroke-linecap="round" stroke-linejoin="round" x="-8.95" y="-5.6" width="17.9" height="11.2" rx="1.6"/><line fill="none" stroke="#0080cc" stroke-width="2.6" stroke-linecap="round" stroke-linejoin="round" x1="-3.4" y1="-5.6" x2="-3.4" y2="5.6"/></g><rect fill="none" stroke="#999999" stroke-width="2.4" x="57.6" y="480.9" width="14.5" height="14.6"/><path fill="none" stroke="#999999" stroke-width="1.8" d="M57.3,475.2 H73 M57.3,472.5 V478 M73,472.5 V478 M77.6,480 V496.4 M75.2,480 H80.2 M75.2,496.4 H80.2"/><g transform="translate(19.4,534.3) rotate(-45)"><rect fill="none" stroke="#0080cc" stroke-width="2.6" stroke-linecap="round" stroke-linejoin="round" x="-10.65" y="-4.75" width="21.3" height="9.5" rx="1.2"/><path fill="none" stroke="#0080cc" stroke-width="2.6" stroke-linecap="round" stroke-linejoin="round" d="M-6.7,-4.7 V-0.9 M-2.2,-4.7 V-0.9 M2.3,-4.7 V-0.9 M6.8,-4.7 V-0.9"/></g><path fill="none" stroke="#0080cc" stroke-width="2.6" stroke-linecap="round" stroke-linejoin="round" d="M60.3,523 V540 M63.5,543.5 H80.8"/><rect fill="none" stroke="#0080cc" stroke-width="2.2" x="58.2" y="540.8" width="4.2" height="4"/><path fill="none" stroke="#0080cc" stroke-width="2.6" stroke-linecap="round" stroke-linejoin="round" d="M74.3,523.8 L79,528.5 L70.2,537.3 L65.5,537.6 L65.5,532.6 Z"/><rect fill="none" stroke="#0080cc" stroke-width="2.6" stroke-linecap="round" stroke-linejoin="round" stroke-width="2.5" x="8.4" y="574.2" width="22.3" height="22.3" rx="2.5"/><rect fill="#0080cc" x="20.1" y="576.6" width="8.2" height="8.2" rx="1.2"/><rect fill="none" stroke="#0080cc" stroke-width="2" x="11.8" y="586.8" width="6.3" height="6.3"/><path fill="none" stroke="#0080cc" stroke-width="2.6" stroke-linecap="round" stroke-linejoin="round" stroke-width="2.8" d="M66.2,578.4 V576.4 H57.5 V594.4 H66.2 V592.3 M70.7,578.4 V576.4 H79.4 V594.4 H70.7 V592.3"/><path fill="none" stroke="#0080cc" stroke-width="2.6" stroke-linecap="round" stroke-linejoin="round" stroke-width="1.8" d="M60.6,585.3 H66.2 M76.4,585.3 H70.6"/><path fill="#0080cc" stroke="#0080cc" stroke-width="1.2" stroke-linejoin="round" d="M64,582.2 L67.6,585.3 L64,588.4 Z M72.9,582.2 L69.3,585.3 L72.9,588.4 Z"/><path fill="none" stroke="#0080cc" stroke-width="2.6" stroke-linecap="round" stroke-linejoin="round" stroke-width="2.8" d="M8.6,631.6 L19.6,626.2 L30.6,631.6 L19.6,637.2 Z M8.6,637 L19.6,642.5 L30.6,637 M8.6,642.2 L19.6,647.7 L30.6,642.2"/><path fill="none" stroke="#999999" stroke-width="2.6" stroke-linecap="round" stroke-linejoin="round" stroke-width="2.1" d="M79.2,646.8 H63.8 A6.6,6.6 0 0 1 63.8,633.6 L64.1,632.6 A6.8,6.8 0 0 1 77.7,632.6 V635.5 M79.2,639.6 H74 V632 A3.1,3.1 0 0 0 67.8,632 V637.4 H63.5 A2.75,2.75 0 0 0 63.5,642.9 H79.2"/><rect fill="none" stroke="#0080cc" stroke-width="2.6" stroke-linecap="round" stroke-linejoin="round" stroke-width="2.5" x="10.2" y="678" width="18.8" height="19" rx="1.5"/><path fill="none" stroke="#0080cc" stroke-width="2.6" stroke-linecap="round" stroke-linejoin="round" stroke-width="2.2" stroke-linecap="butt" d="M10.2,683.6 H29 M17.1,683.6 V697"/><path fill="none" stroke="#999999" stroke-width="2.6" stroke-linecap="round" stroke-linejoin="round" stroke-width="2.2" d="M63.4,692.3 V678 L73.8,687.9 M64,687.4 L69.8,685.3 M58.3,692.8 C56.5,694.2 56.8,697.6 59.5,697 L76.5,690.2 C79.5,689.2 81.2,691.6 79,694.6"/><rect fill="#0080cc" x="56.1" y="740.8" width="11.6" height="7" rx="2"/><rect fill="#0080cc" x="70.1" y="740.8" width="11.6" height="7" rx="2"/><path fill="none" stroke="#0080cc" stroke-width="2.6" stroke-linecap="round" stroke-linejoin="round" stroke-width="2.2" d="M68.5,729 V735.2 M60.3,732.4 L64.7,736.8 M76.7,732.4 L72.4,736.8"/><path fill="none" stroke="#0080cc" stroke-width="2.6" stroke-linecap="round" stroke-linejoin="round" stroke-width="2.6" d="M14.7,908.5 V904.6 A4.8,4.8 0 0 1 24.3,904.6 V908.5"/><rect fill="none" stroke="#0080cc" stroke-width="2.6" stroke-linecap="round" stroke-linejoin="round" stroke-width="2.6" x="10.6" y="909" width="17.3" height="11.4" rx="1.5"/><line fill="none" stroke="#0080cc" stroke-width="2.6" stroke-linecap="round" stroke-linejoin="round" stroke-width="2.4" x1="19.3" y1="914.9" x2="19.3" y2="916.6"/></svg>
<div class="abs" style="left:-10px;top:5px;width:1229px;height:71px;background:#fff;border-radius:10px"></div>
<div class="sep" style="left:167.0px;top:14px;height:53px"></div>
<div class="sep" style="left:347.7px;top:14px;height:53px"></div>
<div class="sep" style="left:931.9px;top:14px;height:53px"></div>
<div class="sep" style="left:1038.0px;top:14px;height:53px"></div>
<div class="lbl" style="left:39px;top:54.5px">文件</div>
<div class="lbl" style="left:113.5px;top:54.5px">保存</div>
<div class="lbl" style="left:219.5px;top:54.5px">撤销</div>
<div class="lbl" style="left:295px;top:54.5px">重做</div>
<div class="lbl" style="left:391px;top:54.5px">原点</div>
<div class="lbl" style="left:588.6px;top:54.5px">等比</div>
<div class="lbl" style="left:984.5px;top:54.5px">造物</div>
<div class="lbl" style="left:1090.5px;top:54.5px">设置</div>
<div class="lbl" style="left:1165px;top:54.5px">帮助</div>
<svg class="abs" style="left:0;top:0" width="1220" height="80" viewBox="0 0 1220 80"><path fill="none" stroke="#0080cc" stroke-width="3" stroke-linecap="round" stroke-linejoin="round" d="M28.3,16.5 H39.6 L49.6,26.5 V43.4 H28.3 Z M38.2,16.8 V27.2 H49"/><path fill="none" stroke="#0080cc" stroke-width="3" stroke-linecap="round" stroke-linejoin="round" stroke-width="2.8" d="M33.5,32.2 H44 M33.5,37 H44"/><path fill="none" stroke="#0080cc" stroke-width="3" stroke-linecap="round" stroke-linejoin="round" d="M102.2,18.4 H125.4 V42 H102.2 Z M107.6,19 V26.5 H119.8 V19 M108,34.3 H119.5"/><path fill="none" stroke="#0080cc" stroke-width="3" stroke-linecap="round" stroke-linejoin="round" stroke-width="3.3" d="M215.1,20.7 L206,29.8 L215.1,38.9 M206.6,29.8 H223 C229.6,29.8 233.8,34.2 233.8,41.3"/><path fill="none" stroke="#999" stroke-width="3.3" stroke-linecap="round" stroke-linejoin="round" d="M299.6,20.7 L308.7,29.8 L299.6,38.9 M308.1,29.8 H291.7 C285.1,29.8 280.9,34.2 280.9,41.3"/><path fill="#0080cc" fill-rule="evenodd" d="M377.70,14.90 h5.3 a1.8,1.8 0 0 1 1.8,1.8 v5.3 a1.8,1.8 0 0 1 -1.8,1.8 h-5.3 a1.8,1.8 0 0 1 -1.8,-1.8 v-5.3 a1.8,1.8 0 0 1 1.8,-1.8 Z M378.90,17.90 v2.9 h2.9 v-2.9 Z"/><path fill="#0080cc" fill-rule="evenodd" d="M377.70,25.50 h5.3 a1.8,1.8 0 0 1 1.8,1.8 v5.3 a1.8,1.8 0 0 1 -1.8,1.8 h-5.3 a1.8,1.8 0 0 1 -1.8,-1.8 v-5.3 a1.8,1.8 0 0 1 1.8,-1.8 Z M378.90,28.50 v2.9 h2.9 v-2.9 Z"/><path fill="#0080cc" fill-rule="evenodd" d="M377.70,36.10 h5.3 a1.8,1.8 0 0 1 1.8,1.8 v5.3 a1.8,1.8 0 0 1 -1.8,1.8 h-5.3 a1.8,1.8 0 0 1 -1.8,-1.8 v-5.3 a1.8,1.8 0 0 1 1.8,-1.8 Z M378.90,39.10 v2.9 h2.9 v-2.9 Z"/><path fill="#0080cc" fill-rule="evenodd" d="M388.30,14.90 h5.3 a1.8,1.8 0 0 1 1.8,1.8 v5.3 a1.8,1.8 0 0 1 -1.8,1.8 h-5.3 a1.8,1.8 0 0 1 -1.8,-1.8 v-5.3 a1.8,1.8 0 0 1 1.8,-1.8 Z M389.50,17.90 v2.9 h2.9 v-2.9 Z"/><rect fill="#0080cc" x="386.5" y="25.5" width="8.9" height="8.9" rx="1.8"/><path fill="#0080cc" fill-rule="evenodd" d="M388.30,36.10 h5.3 a1.8,1.8 0 0 1 1.8,1.8 v5.3 a1.8,1.8 0 0 1 -1.8,1.8 h-5.3 a1.8,1.8 0 0 1 -1.8,-1.8 v-5.3 a1.8,1.8 0 0 1 1.8,-1.8 Z M389.50,39.10 v2.9 h2.9 v-2.9 Z"/><path fill="#0080cc" fill-rule="evenodd" d="M398.90,14.90 h5.3 a1.8,1.8 0 0 1 1.8,1.8 v5.3 a1.8,1.8 0 0 1 -1.8,1.8 h-5.3 a1.8,1.8 0 0 1 -1.8,-1.8 v-5.3 a1.8,1.8 0 0 1 1.8,-1.8 Z M400.10,17.90 v2.9 h2.9 v-2.9 Z"/><path fill="#0080cc" fill-rule="evenodd" d="M398.90,25.50 h5.3 a1.8,1.8 0 0 1 1.8,1.8 v5.3 a1.8,1.8 0 0 1 -1.8,1.8 h-5.3 a1.8,1.8 0 0 1 -1.8,-1.8 v-5.3 a1.8,1.8 0 0 1 1.8,-1.8 Z M400.10,28.50 v2.9 h2.9 v-2.9 Z"/><path fill="#0080cc" fill-rule="evenodd" d="M398.90,36.10 h5.3 a1.8,1.8 0 0 1 1.8,1.8 v5.3 a1.8,1.8 0 0 1 -1.8,1.8 h-5.3 a1.8,1.8 0 0 1 -1.8,-1.8 v-5.3 a1.8,1.8 0 0 1 1.8,-1.8 Z M400.10,39.10 v2.9 h2.9 v-2.9 Z"/><path fill="none" stroke="#0080cc" stroke-width="3" stroke-linecap="round" stroke-linejoin="round" d="M582.5,27.5 V23 A6.1,6.1 0 0 1 594.7,23 V27.5"/><rect fill="none" stroke="#0080cc" stroke-width="3" stroke-linecap="round" stroke-linejoin="round" x="577.3" y="28.7" width="22.7" height="15.5" rx="1.8"/><line fill="none" stroke="#0080cc" stroke-width="3" stroke-linecap="round" stroke-linejoin="round" stroke-width="3" x1="588.6" y1="36.3" x2="588.6" y2="38.4"/><path fill="none" stroke="#0080cc" stroke-width="1.9" stroke-linecap="butt" d="M632.9,16 V30.8 M651.1,16 V30.8 M635.5,23.3 H648.6"/><path fill="none" stroke="#0080cc" stroke-width="1.8" stroke-linecap="round" stroke-linejoin="round" d="M638.6,20.1 L635.5,23.3 L638.6,26.5 M645.5,20.1 L648.6,23.3 L645.5,26.5"/><path fill="none" stroke="#0080cc" stroke-width="1.9" d="M634.3,46.7 H651 M634.3,63.1 H651 M642.6,49.8 V60.2"/><path fill="none" stroke="#0080cc" stroke-width="1.8" stroke-linecap="round" stroke-linejoin="round" d="M639.5,52.6 L642.6,49.6 L645.7,52.6 M639.5,57.3 L642.6,60.4 L645.7,57.3"/><path fill="none" stroke="#0080cc" stroke-width="3.4" d="M852.60,19.20 A10.7,10.7 0 0 1 852.60,40.60"/><path fill="none" stroke="#0080cc" stroke-width="3.4" d="M851.67,40.56 A10.7,10.7 0 0 1 845.58,37.98"/><path fill="none" stroke="#0080cc" stroke-width="3.4" d="M844.52,36.92 A10.7,10.7 0 0 1 841.94,30.83"/><path fill="none" stroke="#0080cc" stroke-width="3.4" d="M841.94,28.97 A10.7,10.7 0 0 1 844.65,22.74"/><path fill="#0080cc" d="M852.8000000000001,12.899999999999999 L844.0,19.5 L852.8000000000001,25.9 Z"/><path fill="none" stroke="#0080cc" stroke-width="3.4" d="M891.10,19.20 A10.7,10.7 0 0 0 891.10,40.60"/><path fill="none" stroke="#0080cc" stroke-width="3.4" d="M892.03,40.56 A10.7,10.7 0 0 0 898.12,37.98"/><path fill="none" stroke="#0080cc" stroke-width="3.4" d="M899.18,36.92 A10.7,10.7 0 0 0 901.76,30.83"/><path fill="none" stroke="#0080cc" stroke-width="3.4" d="M901.76,28.97 A10.7,10.7 0 0 0 899.05,22.74"/><path fill="#0080cc" d="M890.9,12.899999999999999 L899.7,19.5 L890.9,25.9 Z"/><path fill="none" stroke="#0080cc" stroke-width="3" stroke-linecap="round" stroke-linejoin="round" stroke-width="3.4" d="M985,17.4 L998.2,24 V38 L985,44.4 L971.8,38 V24 Z M971.8,24 L985,30.6 L998.2,24 M985,30.6 V44"/><path fill="#0080cc" d="M985,17.4 L998.2,24 L985,30.6 L971.8,24 Z"/><path fill="none" stroke="#fff" stroke-width="1.7" stroke-linecap="round" d="M977.4,24.3 L985.9,28.2 M983.8,20.8 L992.4,24.6"/><circle cx="1091" cy="29.9" r="11.9" fill="#0080cc"/><rect x="1088.40" y="15.00" width="5.2" height="7" rx="1.1" fill="#0080cc" transform="rotate(0 1091 29.9)"/><rect x="1088.40" y="15.00" width="5.2" height="7" rx="1.1" fill="#0080cc" transform="rotate(45 1091 29.9)"/><rect x="1088.40" y="15.00" width="5.2" height="7" rx="1.1" fill="#0080cc" transform="rotate(90 1091 29.9)"/><rect x="1088.40" y="15.00" width="5.2" height="7" rx="1.1" fill="#0080cc" transform="rotate(135 1091 29.9)"/><rect x="1088.40" y="15.00" width="5.2" height="7" rx="1.1" fill="#0080cc" transform="rotate(180 1091 29.9)"/><rect x="1088.40" y="15.00" width="5.2" height="7" rx="1.1" fill="#0080cc" transform="rotate(225 1091 29.9)"/><rect x="1088.40" y="15.00" width="5.2" height="7" rx="1.1" fill="#0080cc" transform="rotate(270 1091 29.9)"/><rect x="1088.40" y="15.00" width="5.2" height="7" rx="1.1" fill="#0080cc" transform="rotate(315 1091 29.9)"/><circle cx="1091" cy="29.9" r="4.8" fill="#fff"/><circle fill="none" stroke="#0080cc" stroke-width="3" stroke-linecap="round" stroke-linejoin="round" stroke-width="3.4" cx="1166.1" cy="29.9" r="13.2"/><path fill="none" stroke="#0080cc" stroke-width="3" stroke-linecap="round" stroke-linejoin="round" stroke-width="3.2" d="M1161.4,26.3 A4.7,4.7 0 1 1 1168.3,30.4 C1166.6,31.4 1166,32.4 1166,34.2"/><circle fill="#0080cc" cx="1166" cy="38.1" r="2.1"/></svg>
<div class="abs" style="left:436.5px;top:17.1px;font-size:18px;font-weight:bold;color:#0080cc;line-height:1">X</div>
<div class="abs" style="left:436.5px;top:48.4px;font-size:18px;font-weight:bold;color:#0080cc;line-height:1">Y</div>
<div class="inp" style="left:455px;top:12px;width:61px;height:26px;padding-left:3px;padding-top:4.9px">402.52</div>
<div class="inp" style="left:455px;top:43px;width:61px;height:26px;padding-left:3px;padding-top:4.9px">162.43</div>
<div class="unit" style="left:522px;top:18px">mm</div>
<div class="unit" style="left:522px;top:49px">mm</div>
<div class="inp" style="left:660px;top:11px;width:61px;height:26px;padding-left:3px;padding-top:4.9px">154.97</div>
<div class="inp" style="left:660px;top:42px;width:61px;height:26px;padding-left:3px;padding-top:4.9px">95.15</div>
<div class="unit" style="left:727px;top:17px">mm</div>
<div class="unit" style="left:727px;top:48px">mm</div>
<div class="inp" style="left:761px;top:11px;width:37px;height:26px;padding-left:3px;padding-top:4.9px">100</div>
<div class="inp" style="left:761px;top:42px;width:37px;height:26px;padding-left:3px;padding-top:4.9px">100</div>
<div class="unit" style="left:804px;top:15px;font-size:18px">%</div>
<div class="unit" style="left:804px;top:46px;font-size:18px">%</div>
<div class="inp" style="left:839px;top:47px;width:66px;height:22px;text-align:center;padding-top:2.9px">90.00</div>
</body></html>
